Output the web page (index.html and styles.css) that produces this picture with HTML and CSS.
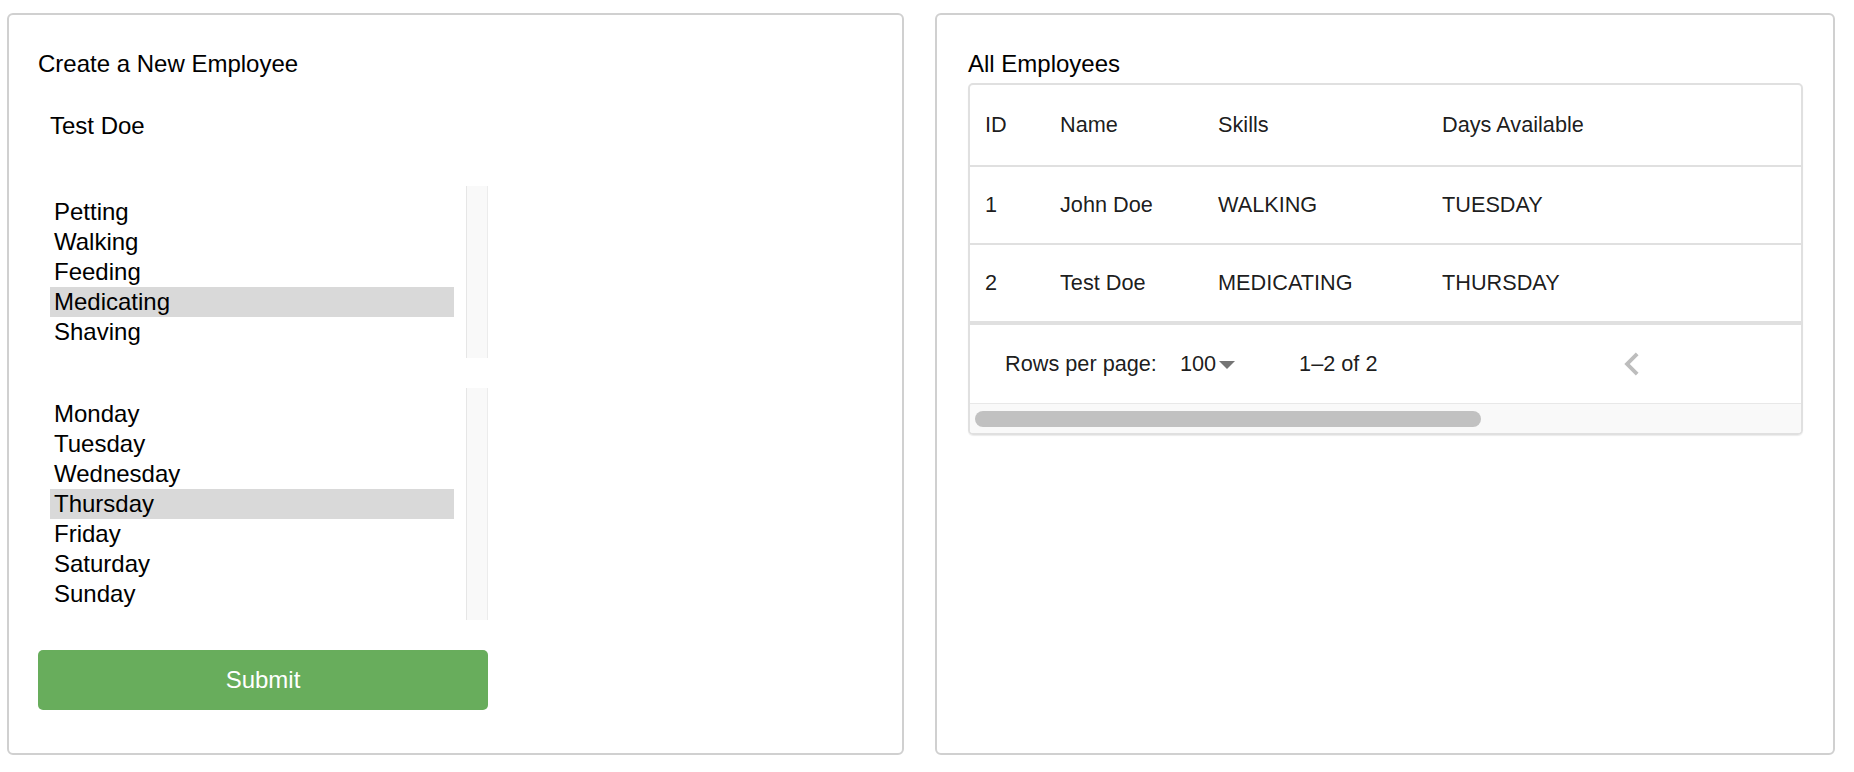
FILE: index.html
```html
<!DOCTYPE html>
<html lang="en">
<head>
<meta charset="utf-8">
<title>Employees</title>
<link rel="stylesheet" href="styles.css">
</head>
<body>
<main class="page">
  <section class="card form-card">
    <h2 class="card-title">Create a New Employee</h2>
    <div class="text-input">Test Doe</div>
    <div class="listbox">
      <ul class="options">
        <li class="option">Petting</li>
        <li class="option">Walking</li>
        <li class="option">Feeding</li>
        <li class="option selected">Medicating</li>
        <li class="option">Shaving</li>
      </ul>
      <div class="vtrack"></div>
    </div>
    <div class="listbox">
      <ul class="options">
        <li class="option">Monday</li>
        <li class="option">Tuesday</li>
        <li class="option">Wednesday</li>
        <li class="option selected">Thursday</li>
        <li class="option">Friday</li>
        <li class="option">Saturday</li>
        <li class="option">Sunday</li>
      </ul>
      <div class="vtrack"></div>
    </div>
    <button class="submit" type="button">Submit</button>
  </section>

  <section class="card list-card">
    <h2 class="card-title">All Employees</h2>
    <div class="table">
      <div class="grid-row head-row">
        <div class="cell">ID</div>
        <div class="cell">Name</div>
        <div class="cell">Skills</div>
        <div class="cell">Days Available</div>
      </div>
      <div class="grid-row body-row">
        <div class="cell">1</div>
        <div class="cell">John Doe</div>
        <div class="cell">WALKING</div>
        <div class="cell">TUESDAY</div>
      </div>
      <div class="grid-row body-row">
        <div class="cell">2</div>
        <div class="cell">Test Doe</div>
        <div class="cell">MEDICATING</div>
        <div class="cell">THURSDAY</div>
      </div>
      <div class="pagination">
        <span class="pg-label">Rows per page:</span>
        <span class="pg-select">100</span>
        <svg class="pg-arrow" width="16" height="8" viewBox="0 0 16 8"><polygon points="0,0 16,0 8,8" fill="#757575"/></svg>
        <span class="pg-range">1–2 of 2</span>
        <svg class="pg-prev" width="46" height="46" viewBox="0 0 24 24"><path d="M15.41 16.59L10.83 12l4.58-4.59L14 6l-6 6 6 6 1.41-1.41z" fill="#bdbdbd"/></svg>
      </div>
      <div class="htrack"><div class="hthumb"></div></div>
    </div>
  </section>
</main>
</body>
</html>
```
FILE: styles.css
```css
html, body {
  margin: 0;
  background: #ffffff;
}

body {
  font-family: "Liberation Sans", Arial, Helvetica, sans-serif;
  color: #000000;
}

.page {
  display: flex;
  gap: 31px;
  padding: 13px 19px 0 7px;
}

.card {
  flex: 1;
  height: 742px;
  box-sizing: border-box;
  border: 2px solid #d0d0d0;
  border-radius: 6px;
}

.form-card {
  padding: 35px 29px 0;
}

.list-card {
  padding: 35px 30px 0 31px;
}

.card-title {
  margin: 0;
  font-size: 24px;
  font-weight: normal;
  line-height: 28px;
}

.text-input {
  margin-top: 22px;
  width: 450px;
  box-sizing: border-box;
  padding: 12px;
  font-size: 24px;
  line-height: 28px;
}

.listbox {
  display: flex;
  width: 450px;
  margin-top: 34px;
}

.listbox + .listbox {
  margin-top: 30px;
}

.options {
  flex: 1;
  list-style: none;
  margin: 0;
  padding: 11px 12px 11px;
}

.option {
  height: 30px;
  line-height: 30px;
  padding-left: 4px;
  font-size: 24px;
}

.option.selected {
  background: #d9d9d9;
}

.vtrack {
  width: 22px;
  box-sizing: border-box;
  background: #f9f9f9;
  border-left: 1px solid #e6e6e6;
  border-right: 1px solid #ececec;
}

.submit {
  display: block;
  margin-top: 30px;
  width: 450px;
  height: 60px;
  border: none;
  border-radius: 5px;
  background: #68ad5c;
  color: #ffffff;
  font-family: inherit;
  font-size: 24px;
  padding: 0;
}

.table {
  margin-top: 5px;
  border: 2px solid #e0e0e0;
  border-radius: 5px;
  overflow: hidden;
  box-shadow: 0 1px 1px rgba(0, 0, 0, 0.08);
}

.grid-row {
  display: grid;
  grid-template-columns: 75px 158px 224px 1fr;
  align-items: center;
  border-bottom: 2px solid #e0e0e0;
  font-size: 21.7px;
  color: rgba(0, 0, 0, 0.9);
}

.head-row {
  height: 80px;
}

.body-row {
  height: 76px;
}

.cell {
  padding-left: 15px;
  white-space: nowrap;
}

.pagination {
  display: flex;
  align-items: center;
  height: 78px;
  border-top: 2px solid #e0e0e0;
  padding-left: 35px;
  font-size: 21.7px;
  color: rgba(0, 0, 0, 0.9);
  white-space: nowrap;
}

.pg-select {
  margin-left: 23px;
}

.pg-arrow {
  margin-left: 3px;
  margin-top: 2px;
}

.pg-range {
  margin-left: 64px;
}

.pg-prev {
  margin-left: 232px;
}

.htrack {
  height: 22px;
  border-top: 1px solid #e8e8e8;
  background: #f9f9f9;
  padding-top: 7px;
}

.hthumb {
  width: 506px;
  height: 16px;
  margin-left: 5px;
  border-radius: 8px;
  background: #c1c1c1;
}
```
